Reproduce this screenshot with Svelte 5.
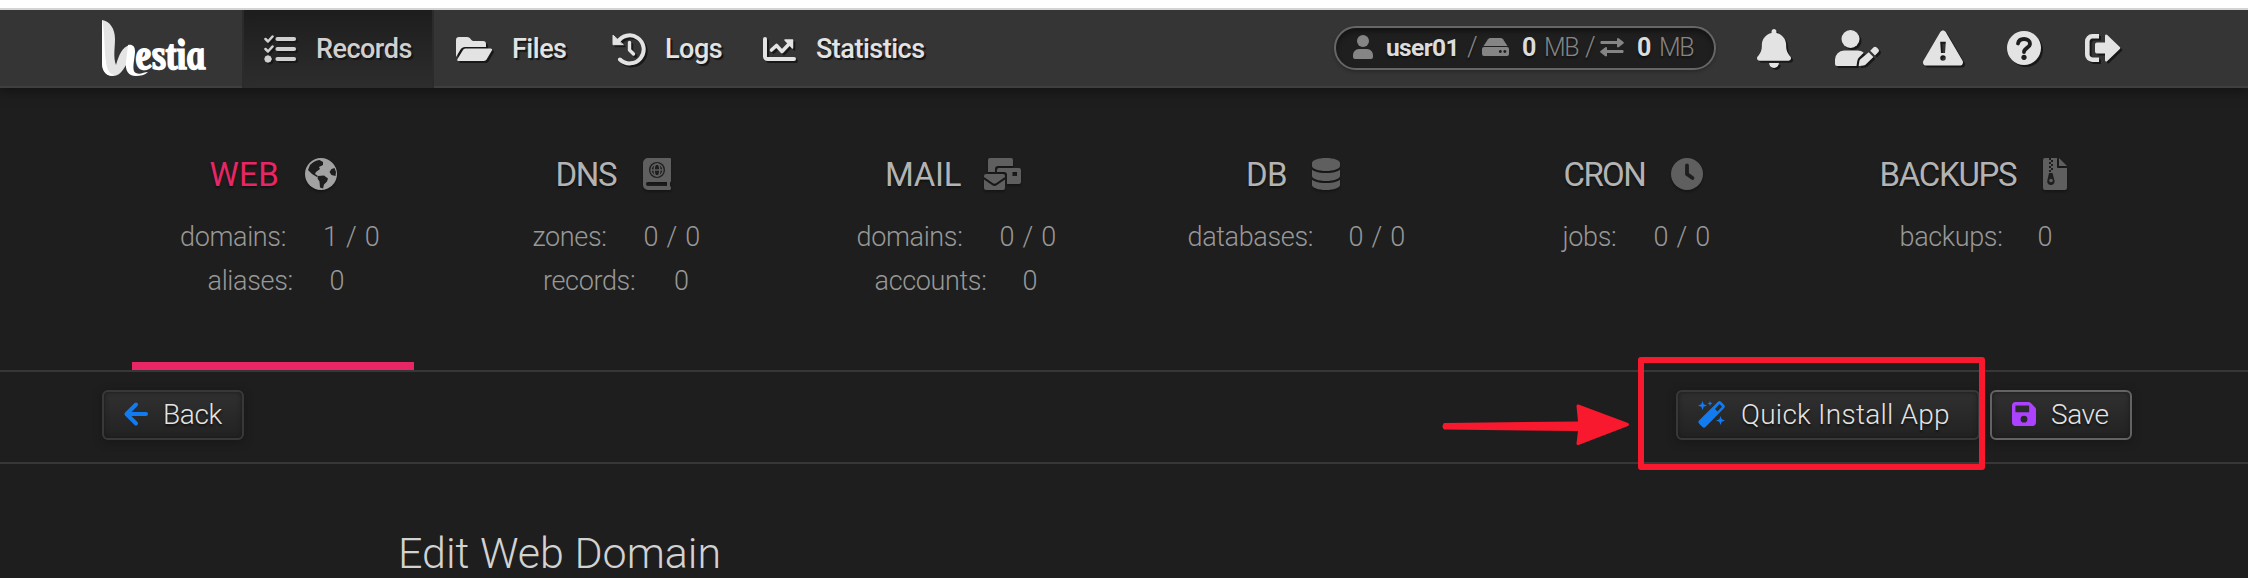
<script>
	// top navigation, width is the full tab width
	const tabs = [
		{ icon: 'list', label: 'Records', w: 32, h: 28, gap: 20, width: 192, active: true },
		{ icon: 'folder', label: 'Files', w: 36, h: 24, gap: 20, width: 157 },
		{ icon: 'history', label: 'Logs', w: 32, h: 32, gap: 20, width: 150 },
		{ icon: 'chart', label: 'Statistics', w: 33, h: 24, gap: 20, width: 206 },
	];

	const actions = [
		{ icon: 'bell', w: 34, h: 39 },
		{ icon: 'userpen', w: 44, h: 36 },
		{ icon: 'warning', w: 40, h: 40 },
		{ icon: 'help', w: 34, h: 34 },
		{ icon: 'exit', w: 36, h: 28 },
	];

	// tw is the title width, ls its letter spacing
	const stats = [
		{ title: 'WEB', icon: 'globe', w: 32, tw: 69, ls: 0.3, active: true, rows: [['domains', '1 / 0', 106, 50], ['aliases', '0', 85, 16]] },
		{ title: 'DNS', icon: 'atlas', w: 28, tw: 61, ls: -1.3, rows: [['zones', '0 / 0', 74, 57], ['records', '0', 94, 16]] },
		{ title: 'MAIL', icon: 'mail', w: 37, tw: 73, ls: -0.3, rows: [['domains', '0 / 0', 106, 57], ['accounts', '0', 111, 16]] },
		{ title: 'DB', icon: 'database', w: 28, tw: 40, ls: -0.6, rows: [['databases', '0 / 0', 124, 57]] },
		{ title: 'CRON', icon: 'clock', w: 32, tw: 81, ls: -1.6, rows: [['jobs', '0 / 0', 54, 57]] },
		{ title: 'BACKUPS', icon: 'zip', w: 24, tw: 137, ls: -1.3, rows: [['backups', '0', 101, 16]] },
	];
</script>

{#snippet icon(name, w, h)}
	{#if name === 'list'}
		<svg width={w} height={h} viewBox="0 0 32 28" class="stroke">
			<path d="M1.500 4l2.500 2.500L8.500 1.500M1.500 14l2.500 2.500L8.500 11.500" stroke-width="2.500" />
			<path d="M13.500 4H30M13.500 14H30M13.500 24H30" stroke-width="4.200" />
			<circle cx="4" cy="24" r="3.200" class="fill" />
		</svg>
	{:else if name === 'folder'}
		<svg width={w} height={h} viewBox="0 0 36 24">
			<path d="M0 20V3a3 3 0 0 1 3-3h8c2 0 3 1 4 2.500S17 4 18 4h9a3 3 0 0 1 3 3v3H9c-2 0-3.500 1-4.500 2.500z" />
			<path d="M1.500 22L7 13c.7-1 1.500-1.500 3-1.500h24.500c1.500 0 2 1 1.200 2.300l-5 8.500c-.7 1.200-1.500 1.700-3 1.700H2.500c-1.200 0-1.700-1-1-2z" />
		</svg>
	{:else if name === 'history'}
		<svg width={w} height={h} viewBox="0 0 32 32" class="stroke">
			<path d="M4.500 9.500A14 14 0 1 1 7 26.500" stroke-width="4" />
			<path d="M16.500 9.500V17l4 4" stroke-width="3.400" />
			<path d="M0 2.500v9.200h10z" class="fill" stroke-width="1" />
		</svg>
	{:else if name === 'chart'}
		<svg width={w} height={h} viewBox="0 0 33 24" class="stroke">
			<path d="M2 2v17.500a2.500 2.500 0 0 0 2.500 2.500H31" stroke-width="4" />
			<path d="M8.500 13L13.500 8.500l5.500 6L27 6" stroke-width="3.600" />
			<path d="M22 3h7.500v8z" class="fill" stroke-width="1.500" />
		</svg>
	{:else if name === 'user'}
		<svg width={w} height={h} viewBox="0 0 20 24">
			<circle cx="10" cy="6" r="6" />
			<path d="M6 14h8a6 6 0 0 1 6 6.500V22a2 2 0 0 1-2 2H2a2 2 0 0 1-2-2v-1.500A6 6 0 0 1 6 14z" />
		</svg>
	{:else if name === 'drive'}
		<svg width={w} height={h} viewBox="0 0 27 18">
			<path d="M1.500 8L6 1.300Q7 0 8.500 0h10q1.500 0 2.500 1.300L25.500 8z" />
			<path fill-rule="evenodd" d="M2 9h23a2 2 0 0 1 2 2v5a2 2 0 0 1-2 2H2a2 2 0 0 1-2-2v-5a2 2 0 0 1 2-2zM18.300 12a1.500 1.500 0 1 0 .1 0zM22.800 12a1.500 1.500 0 1 0 .1 0z" />
		</svg>
	{:else if name === 'transfer'}
		<svg width={w} height={h} viewBox="0 0 24 18">
			<path d="M1 3h16V.5q1-1 2 0L23.500 4q.8.700 0 1.400L19 9q-1 .8-2 0V6H1Q-.500 4.500 1 3zM23 12H7V9.500q-1-1-2 0L.500 13q-.800.700 0 1.400L5 18q1 .8 2 0v-3h16q1.500-1.500 0-3z" />
		</svg>
	{:else if name === 'bell'}
		<svg width={w} height={h} viewBox="0 0 448 512">
			<path d="M224 0c-17.700 0-32 14.300-32 32v19.200C119 66 64 130.600 64 208v18.800c0 47-17.300 92.400-48.500 127.600l-7.400 8.300c-8.400 9.400-10.400 22.900-5.300 34.400S19.400 416 32 416h384c12.600 0 24-7.400 29.200-18.900s3.100-25-5.300-34.400l-7.400-8.300C401.300 319.200 384 273.900 384 226.800V208c0-77.400-55-142-128-156.800V32c0-17.700-14.300-32-32-32zm45.300 493.300c12-12 18.700-28.300 18.700-45.300H160c0 17 6.700 33.300 18.700 45.300s28.300 18.700 45.300 18.700 33.300-6.700 45.300-18.700z" />
		</svg>
	{:else if name === 'userpen'}
		<svg width={w} height={h} viewBox="0 0 44 36">
			<circle cx="15.500" cy="9" r="9" />
			<path d="M9 20.500h13.500c2.500 0 4.500.8 6.200 2.200L24 27.500c-1 1-1.500 2.500-1.800 4L21.500 36H2a2 2 0 0 1-2-2v-4.500a9 9 0 0 1 9-9z" />
			<path d="M33.700 22.200l4.700 4.700-8 7.800c-.5.500-1.200.8-2 .9l-4 .4c-.5 0-.8-.3-.7-.8l.7-4.200c.1-.700.500-1.300 1-1.800zM35.200 20.700l3.200-3.200c1-1 2.300-1 3.300 0l1.500 1.500c1 1 1 2.300 0 3.300l-3.200 3.100z" />
		</svg>
	{:else if name === 'warning'}
		<svg width={w} height={h} viewBox="0 0 512 512">
			<path fill-rule="evenodd" d="M256 32c14.200 0 27.300 7.500 34.500 19.800l216 368c7.300 12.400 7.300 27.700.2 40.100S486.300 480 472 480H40c-14.300 0-27.600-7.700-34.700-20.100s-7-27.800.2-40.100l216-368C228.700 39.500 241.800 32 256 32zm-36 144l10 144h52l10-144zm71 208a35 35 0 1 0-70 0 35 35 0 1 0 70 0z" />
		</svg>
	{:else if name === 'help'}
		<svg width={w} height={h} viewBox="0 0 34 34">
			<circle cx="17" cy="17" r="17" />
			<path class="cut" d="M11 12.500c.5-3 3-4.500 6-4.500 3.400 0 6 1.700 6 4.700 0 4-6 4.300-6 8.300" />
			<circle class="hole" cx="17" cy="26.300" r="2.600" />
		</svg>
	{:else if name === 'exit'}
		<svg width={w} height={h} viewBox="0 0 36 28">
			<path d="M14 2.300H7.500A5 5 0 0 0 2.300 7.500v13a5 5 0 0 0 5.200 5.200H14" class="outline" />
			<path d="M12 8.500h8V2c0-1.500 1.300-2 2.300-1l12.500 12q1.200 1 0 2L22.300 27c-1 1-2.300.5-2.300-1v-6.500h-8a2 2 0 0 1-2-2v-7a2 2 0 0 1 2-2z" />
		</svg>
	{:else if name === 'globe'}
		<svg width={w} height={h} viewBox="0 0 32 32">
			<circle cx="16" cy="16" r="16" />
			<path class="hole" d="M5 7c3-3 6-4.500 9.500-5l3.500 2v3l-4 2 1 2-4 3-1 2 3 2-1 1-5-3-4-4zM13 18l6-.5 4 3-1 3-3 3-1 4-3-1-.5-6-2-3zM26.500 11l3-1 1.500 4-.5 4-4-1-2-3z" />
		</svg>
	{:else if name === 'atlas'}
		<svg width={w} height={h} viewBox="0 0 28 32">
			<path fill-rule="evenodd" d="M5 0h22a1 1 0 0 1 1 1v22q0 1-1 1.500V28q1 .5 1 2t-1 2H5a5 5 0 0 1-5-5V5a5 5 0 0 1 5-5zm0 24a2 2 0 0 0 0 4h19v-4z" />
			<circle class="hole" cx="14" cy="12" r="8" />
			<g class="lines">
				<circle cx="14" cy="12" r="6" />
				<ellipse cx="14" cy="12" rx="2.800" ry="6" />
				<path d="M8 12h12" />
			</g>
		</svg>
	{:else if name === 'mail'}
		<svg width={w} height={h} viewBox="0 0 37 32">
			<path d="M4 14V2a2 2 0 0 1 2-2h21a2 2 0 0 1 2 2v6H14a3 3 0 0 0-3 3v3z" />
			<path fill-rule="evenodd" d="M13 14v-2a2 2 0 0 1 2-2h20a2 2 0 0 1 2 2v12a2 2 0 0 1-2 2H23V17a3 3 0 0 0-3-3zm15.500 0v4h4.500v-4z" />
			<path d="M0 18a2 2 0 0 1 2-2h17a2 2 0 0 1 2 2v1l-8.500 6q-2 1.500-4 0L0 19zM0 21.500l8 5.500q2.500 1.800 5 0l8-5.500V30a2 2 0 0 1-2 2H2a2 2 0 0 1-2-2z" />
		</svg>
	{:else if name === 'database'}
		<svg width={w} height={h} viewBox="0 0 448 512">
			<path d="M448 80v48c0 44.200-100.300 80-224 80S0 172.200 0 128V80C0 35.800 100.300 0 224 0s224 35.800 224 80zM393.200 214.700c20.800-7.400 39.900-16.900 54.800-28.600V288c0 44.200-100.300 80-224 80S0 332.200 0 288V186.100c14.900 11.800 34 21.200 54.800 28.600C99.700 230.700 159.500 240 224 240s124.300-9.300 169.200-25.300zM0 346.100c14.900 11.800 34 21.200 54.800 28.600C99.700 390.700 159.500 400 224 400s124.300-9.300 169.200-25.300c20.800-7.400 39.900-16.900 54.800-28.600V432c0 44.200-100.300 80-224 80S0 476.200 0 432z" />
		</svg>
	{:else if name === 'clock'}
		<svg width={w} height={h} viewBox="0 0 32 32">
			<circle cx="16" cy="16" r="16" />
			<path class="cut" d="M16 7.500V16l5.500 4" />
		</svg>
	{:else if name === 'zip'}
		<svg width={w} height={h} viewBox="0 0 24 32">
			<path d="M2 0h12v9a1 1 0 0 0 1 1h9v20a2 2 0 0 1-2 2H2a2 2 0 0 1-2-2V2a2 2 0 0 1 2-2zM16 0l8 8h-8z" />
			<path class="hole" d="M6 0h2v2H6zM8 2h2v2H8zM6 4h2v2H6zM8 6h2v2H8zM6 8h2v2H6zM8 10h2v2H8zM6 12h2v2H6zM6 15h3.500l2 7.500a3.700 3.700 0 1 1-7.200 0z" />
			<circle cx="8" cy="22.500" r="1.800" />
		</svg>
	{:else if name === 'back'}
		<svg width={w} height={h} viewBox="0 0 24 24" class="stroke">
			<path d="M12 2.500L2.500 12l9.500 9.500M3 12h19" stroke-width="4" />
		</svg>
	{:else if name === 'wand'}
		<svg width={w} height={h} viewBox="0 0 27 27">
			<path fill-rule="evenodd" d="M1 19.500L20 .8q1.500-1.500 3 0l3.200 3.200q1.500 1.500 0 3L7.500 26q-1.500 1.500-3 0L1 22.500q-1.500-1.500 0-3zM17 8l2.500 2.500 4.500-4.800L21.500 3z" />
			<path d="M4.500 0l1.200 3.300L9 4.500 5.700 5.700 4.500 9 3.300 5.700 0 4.500l3.300-1.200zM12 0l.7 1.800 1.800.7-1.800.7L12 5l-.7-1.800-1.800-.7 1.800-.7zM22.500 15l1.200 3.300 3.300 1.200-3.300 1.200-1.200 3.300-1.200-3.300-3.300-1.200 3.300-1.200z" />
		</svg>
	{:else if name === 'save'}
		<svg width={w} height={h} viewBox="0 32 448 448">
			<path fill-rule="evenodd" d="M64 32C28.700 32 0 60.700 0 96v320c0 35.300 28.700 64 64 64h320c35.300 0 64-28.700 64-64V173.300c0-17-6.700-33.300-18.700-45.300L352 50.700C340 38.700 323.700 32 306.700 32zm0 64h256v128H64zM224 288a64 64 0 1 1 0 128 64 64 0 1 1 0-128z" />
		</svg>
	{/if}
{/snippet}

<div class="page">
	<header>
		<svg class="logo" width="108" height="60" viewBox="0 0 108 60">
			<path class="ribbon" d="M0 0C8 1 13 9 13 19c0 9-2 18 1 26 3-10 6-18 14-20v14c-5 6-8 17-17 17C4 56 0 51 0 43z" />
			<path class="front" d="M0 0C3 12 2 28 4 42c1 8 4 13 9 13C5 58 0 51 0 43zM26 25c4-1 7 1 7 6 0 8-4 20 1 22 4 2 8-1 12-1-3 3-8 4-12 4-8 0-11-6-10-14z" />
			<text transform="translate(35 49) skewX(9)" textLength="70" lengthAdjust="spacingAndGlyphs">estia</text>
		</svg>

		<nav>
			{#each tabs as tab}
				<a href="#/" class="tab" class:tab-active={tab.active} style:width="{tab.width}px" style:gap="{tab.gap}px">
					{@render icon(tab.icon, tab.w, tab.h)}
					<span>{tab.label}</span>
				</a>
			{/each}
		</nav>

		<div class="usage">
			{@render icon('user', 20, 24)}
			<b class="name">user01</b>
			<span class="slash">/</span>
			{@render icon('drive', 27, 18)}
			<b class="num">0</b>
			<span class="unit">MB</span>
			<span class="slash">/</span>
			{@render icon('transfer', 24, 18)}
			<b class="num">0</b>
			<span class="unit">MB</span>
		</div>

		<div class="actions">
			{#each actions as item}
				<a href="#/">{@render icon(item.icon, item.w, item.h)}</a>
			{/each}
		</div>
	</header>

	<section class="stats">
		{#each stats as stat}
			<a href="#/" class="stat" class:stat-active={stat.active}>
				<div class="title">
					<span style:width="{stat.tw}px" style:letter-spacing="{stat.ls}px">{stat.title}</span>
					{@render icon(stat.icon, stat.w, 32)}
				</div>
				{#each stat.rows as [label, value, lw, vw]}
					<div class="row">
						<span class="label" style:width="{lw}px">{label}:</span>
						<span class="value" style:width="{vw}px">{value}</span>
					</div>
				{/each}
			</a>
		{/each}
	</section>

	<div class="toolbar">
		<button class="back">{@render icon('back', 24, 24)}<span>Back</span></button>
		<div class="right">
			<button class="install">
				{@render icon('wand', 27, 27)}<span>Quick Install App</span>
			</button>
			<button class="save">{@render icon('save', 24, 24)}<span>Save</span></button>
		</div>

		<!-- pointer and frame over the install button -->
		<svg class="pointer" width="190" height="44" viewBox="0 0 190 44">
			<path d="M3 20L137 18.500 135.500 3q0-2 2-1.500L187 20q2 1.500 0 3l-49.500 19q-2 .5-2-1.500L137 28 3 26.500q-3-3 0-6.500z" />
		</svg>
		<div class="frame"></div>
	</div>

	<h1>Edit Web Domain</h1>
</div>

<style>
	:global(body) {
		background: #1e1e1e;
	}

	.page {
		height: 578px;
		overflow: hidden;
		box-sizing: border-box;
		border-top: 8px solid white;
		background: #1e1e1e;
		color: #989898;
		font-family: Roboto, "Liberation Sans", sans-serif;
		font-weight: 300;
	}

	a {
		color: inherit;
		text-decoration: none;
	}

	svg {
		flex: none;
		fill: currentColor;
		overflow: visible;
	}

	.stroke {
		fill: none;
		stroke: currentColor;
		stroke-linecap: round;
		stroke-linejoin: round;
	}

	.fill {
		fill: currentColor;
	}

	.outline {
		fill: none;
		stroke: currentColor;
		stroke-width: 4.6;
	}

	.hole {
		fill: #1e1e1e;
	}

	.cut {
		fill: none;
		stroke: #1e1e1e;
		stroke-width: 3.8;
		stroke-linecap: round;
	}

	.lines {
		fill: none;
		stroke: currentColor;
		stroke-width: 1.4;
	}

	/* Header */

	header {
		display: flex;
		height: 80px;
		box-sizing: border-box;
		padding-left: 102px;
		background: #353535;
		border-top: 2px solid #d4d4d4;
		box-shadow: inset 0 -2px #3f3f3f, 0 2px 12px #111;
		color: #e3e3e3;
	}

	.logo {
		width: 108px;
		margin: 10px 32px 0 0;
	}

	.logo text {
		fill: #fff;
		stroke: #fff;
		stroke-width: 1.6;
		font: bold italic 43px "Liberation Serif", serif;
	}

	.ribbon {
		fill: #e4e4e4;
	}

	.front {
		fill: #fff;
	}

	nav {
		display: flex;
	}

	.tab {
		display: flex;
		align-items: center;
		box-sizing: border-box;
		padding: 0 0 1px 22px;
		font-size: 27px;
		font-weight: 500;
		letter-spacing: -0.5px;
		text-shadow: 2px 2px 1px #151515;
	}

	.tab svg,
	.actions svg {
		filter: drop-shadow(2px 2px 0 #181818);
	}

	.tab-active {
		color: #d0d0d0;
		background: linear-gradient(#1d1d1d, #2d2d2d);
		box-shadow: inset 2px 0 #2b2b2b, inset -2px 0 #2b2b2b;
	}

	.usage {
		display: flex;
		align-items: center;
		box-sizing: border-box;
		width: 382px;
		height: 44px;
		margin: 16px 0 0 387px;
		padding: 0 0 2px 17px;
		border: 2px solid #666;
		border-radius: 22px;
		background: #1f1f1f;
		box-shadow: inset 0 4px 4px #151515, 0 2px 3px #2a2a2a;
		color: #858585;
		font-size: 25px;
		text-shadow: 0 2px 2px #111;
	}

	.usage b {
		color: #dcdcdc;
		font-weight: 700;
	}

	.usage .name {
		width: 81px;
		margin-left: 13px;
		font-size: 24.5px;
		letter-spacing: -0.6px;
	}

	.num {
		width: 22px;
		margin-left: 13px;
	}

	.unit {
		width: 41px;
		letter-spacing: -1.5px;
	}

	.slash {
		width: 15px;
		font-size: 27px;
	}

	.actions {
		display: flex;
		align-items: center;
		gap: 44px;
		margin-left: 41px;
		padding-bottom: 2px;
	}

	.actions a {
		display: flex;
	}

	/* Stats */

	.stats {
		display: grid;
		grid-template-columns: repeat(6, 282px);
		gap: 58px;
		height: 282px;
		padding-left: 132px;
	}

	.stat {
		box-sizing: border-box;
		padding-top: 66px;
		border-bottom: 8px solid transparent;
	}

	.stat-active {
		border-color: #e92665;
	}

	.title {
		display: flex;
		align-items: center;
		justify-content: center;
		gap: 26px;
		height: 40px;
		margin-bottom: 21px;
		color: #b3b3b3;
		font-size: 33px;
		font-weight: 400;
		text-shadow: 0 2px 2px #111;
	}

	.title span,
	.row span {
		white-space: nowrap;
	}

	.title svg {
		color: #5f5f5f;
		filter: drop-shadow(0 2px 1px #151515);
	}

	.stat-active .title {
		color: #e92665;
	}

	.stat-active .title svg {
		color: #a2a2a2;
	}

	.row {
		display: flex;
		justify-content: center;
		gap: 37px;
		padding-left: 7px;
		font-size: 27px;
		line-height: 44px;
	}

	.label {
		letter-spacing: -0.35px;
	}

	.value {
		letter-spacing: 0.7px;
	}

	/* Toolbar */

	.toolbar {
		position: relative;
		display: flex;
		justify-content: space-between;
		align-items: flex-start;
		box-sizing: border-box;
		height: 94px;
		padding: 18px 116px 0 102px;
		border-top: 2px solid #373737;
		border-bottom: 2px solid #373737;
	}

	.right {
		display: flex;
		gap: 10px;
	}

	button {
		display: flex;
		align-items: center;
		gap: 15px;
		box-sizing: border-box;
		width: 142px;
		height: 50px;
		margin: 0;
		padding: 0 0 2px 20px;
		border: 2px solid #383838;
		border-radius: 6px;
		background: linear-gradient(#303030, #222);
		box-shadow: inset 0 0 5px #191919, 0 2px 8px #171717;
		color: #e3e3e3;
		font: inherit;
		font-size: 28px;
		letter-spacing: -0.4px;
		text-shadow: 0 2px 2px #111;
		white-space: nowrap;
	}

	.back svg,
	.install svg {
		color: #127bf0;
	}

	.install {
		width: 304px;
		gap: 16px;
		letter-spacing: 0.25px;
	}

	.save {
		border-color: #636363;
	}

	.save svg {
		color: #ac42ff;
	}

	.pointer {
		position: absolute;
		left: 1441px;
		top: 31px;
		fill: #f8192f;
	}

	.frame {
		position: absolute;
		left: 1638px;
		top: -15px;
		box-sizing: border-box;
		width: 347px;
		height: 113px;
		border: 6px solid #f8192f;
		border-radius: 3px;
	}

	h1 {
		margin: 63px 0 0 398px;
		color: #d2d2d2;
		font-size: 43px;
		font-weight: 300;
		line-height: 52px;
	}
</style>
